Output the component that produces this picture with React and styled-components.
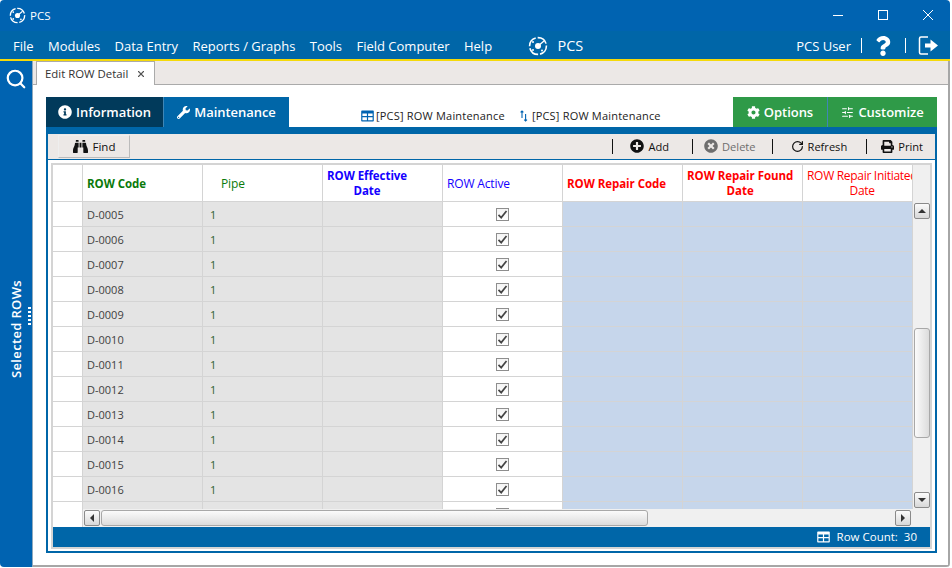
import React from "react";
import styled, { createGlobalStyle } from "styled-components";
import { FaInfoCircle, FaWrench, FaCog, FaBinoculars, FaPlusCircle, FaTimesCircle, FaPrint, FaQuestion } from "react-icons/fa";
import { RotateCw, SlidersHorizontal, Search, X } from "lucide-react";

const BLUE = "#0063b1";
const BAND = "#0066a8";
const LINE = "#d4d4d4";
const FONT = `"Open Sans", "Noto Sans", sans-serif`;

const GlobalStyle = createGlobalStyle`
  html, body { margin: 0; padding: 0; background: #fff; }
  * { box-sizing: border-box; }
  body { font-family: ${FONT}; font-size: 12px; }
`;

const Page = styled.div`
  width: 952px;
  height: 568px;
  overflow: hidden;
`;
const Window = styled.div`
  width: 950px;
  height: 567px;
  display: flex;
  flex-direction: column;
  overflow: hidden;
  background: #fff;
  border-radius: 4px;
`;

const TitleBar = styled.div`
  height: 31px;
  flex: none;
  background: ${BLUE};
  color: #fff;
  display: flex;
  align-items: center;
  padding: 0 0 1px 9px;
  font-size: 11.5px;
`;
const TitleText = styled.span`
  margin-left: 4px;
  flex: 1;
`;
const WinButton = styled.div`
  width: 45px;
  height: 30px;
  display: flex;
  align-items: center;
  justify-content: center;
`;

const MenuBar = styled.div`
  height: 30px;
  flex: none;
  background: ${BAND};
  border-bottom: 2px solid #f5d90a;
  color: #fff;
  display: flex;
  align-items: center;
  padding: 1px 11px 0 13px;
  font-size: 13px;
`;
const MenuItem = styled.span`
  margin-right: 14.4px;
`;
const AppName = styled.div`
  display: flex;
  align-items: center;
  gap: 9px;
  margin-left: 22px;
  font-size: 14.5px;
  flex: 1;
`;
const Divider = styled.span`
  flex: none;
  width: 1px;
  height: 15px;
  background: ${(p) => p.$color || "#fff"};
  margin-left: ${(p) => p.$left ?? 10}px;
  margin-right: ${(p) => p.$right ?? 10}px;
`;
const HelpIcon = styled(FaQuestion)`
  flex: none;
  margin: 0 2px 0 1px;
`;

const Body = styled.div`
  flex: 1;
  min-height: 0;
  display: flex;
`;
const Rail = styled.div`
  width: 33px;
  flex: none;
  background: ${BLUE};
  color: #fff;
  position: relative;
  display: flex;
  flex-direction: column;
  align-items: center;
  padding-top: 7px;
  border-right: 1px solid #8fa9bd;
`;
const RailLabel = styled.div`
  writing-mode: vertical-rl;
  transform: rotate(180deg);
  font-size: 13px;
  font-weight: 600;
  letter-spacing: 0.35px;
  line-height: 16px;
  margin-top: 190px;
`;
const Grip = styled.div`
  position: absolute;
  left: 28px;
  top: 246px;
  width: 3px;
  height: 18px;
  background: repeating-linear-gradient(to bottom, #fff 0 2px, transparent 2px 4px);
`;

const Main = styled.div`
  flex: 1;
  min-width: 0;
  display: flex;
  flex-direction: column;
  border-right: 2px solid #a6a6a6;
  border-bottom: 2px solid #a6a6a6;
`;
const DocTabs = styled.div`
  height: 24px;
  flex: none;
  background: #ece8e6;
  border-bottom: 1px solid #aaa;
  padding-left: 3px;
  display: flex;
`;
const DocTab = styled.div`
  width: 119px;
  height: 24px;
  background: #fff;
  border: 1px solid #aaa;
  border-bottom: none;
  padding: 0 8px 0 8px;
  display: flex;
  align-items: center;
  justify-content: space-between;
  color: #333;
  font-size: 11.4px;
`;
const Content = styled.div`
  flex: 1;
  min-height: 0;
  padding: 12px 11px 12px 13px;
  display: flex;
  flex-direction: column;
`;

const TabRow = styled.div`
  height: 30px;
  flex: none;
  display: flex;
  align-items: stretch;
`;
const PanelTab = styled.div`
  width: ${(p) => p.$w}px;
  background: ${(p) => p.$bg};
  color: #fff;
  font-size: 13px;
  font-weight: 600;
  letter-spacing: -0.05px;
  display: flex;
  align-items: center;
  justify-content: center;
  gap: 4px;
  border-left: ${(p) => (p.$split ? "1px solid #3f86b5" : "none")};
`;
const ViewLabels = styled.div`
  flex: 1;
  display: flex;
  align-items: flex-end;
  padding: 0 0 4px 72px;
  font-size: 11px;
  letter-spacing: 0.2px;
  color: #222;
  gap: 13px;
`;
const ViewLabel = styled.span`
  display: flex;
  align-items: center;
  gap: 2px;
`;

const Panel = styled.div`
  flex: 1;
  min-height: 0;
  border: 2px solid ${BAND};
  border-top-width: 7px;
  padding-bottom: 2px;
  display: flex;
  flex-direction: column;
`;
const Toolbar = styled.div`
  height: 26px;
  flex: none;
  background: #ece8e6;
  border-bottom: 1px solid ${BAND};
  display: flex;
  align-items: center;
  padding: 0 12px 1px 10px;
  font-size: 11.1px;
  color: #111;
`;
const FindButton = styled.div`
  width: 72px;
  height: 23px;
  margin-top: 1px;
  border: 1px solid #bbb;
  border-top-color: #eee;
  border-left-color: #eee;
  display: flex;
  align-items: center;
  justify-content: center;
  gap: 5px;
  margin-right: auto;
  font-size: 11.5px;
`;
const ToolButton = styled.div`
  display: flex;
  align-items: center;
  gap: 4px;
  color: ${(p) => (p.$disabled ? "#6e6e6e" : "#111")};
`;

const GridFrame = styled.div`
  flex: 1;
  min-height: 0;
  margin: 3px 3px 0;
  border: 2px solid ${LINE};
  display: flex;
  flex-direction: column;
`;
const GridBody = styled.div`
  flex: 1;
  min-height: 0;
  display: flex;
`;
const Table = styled.div`
  flex: 1;
  min-width: 0;
  overflow: hidden;
`;
const GridRow = styled.div`
  display: grid;
  grid-template-columns: 30px repeat(6, 120px) 110px;
  height: ${(p) => p.$h}px;
`;
const HeadCell = styled.div`
  border-right: 1px solid ${LINE};
  border-bottom: 1px solid ${LINE};
  background: #fff;
  color: ${(p) => p.$color || "#000"};
  font-weight: ${(p) => (p.$bold ? 700 : 400)};
  font-size: ${(p) => (p.$bold ? 11.5 : 12)}px;
  line-height: 15px;
  letter-spacing: ${(p) => (p.$tight ? -0.3 : p.$bold ? -0.05 : -0.15)}px;
  text-align: center;
  white-space: nowrap;
  padding-left: ${(p) => p.$pad ?? 4}px;
  display: flex;
  align-items: center;
  overflow: hidden;
`;
const Cell = styled.div`
  border-right: 1px solid ${LINE};
  border-bottom: 1px solid ${LINE};
  background: ${(p) => p.$bg || "#fff"};
  color: ${(p) => p.$color || "#3f3f3f"};
  font-size: 11px;
  padding-left: ${(p) => p.$pad || 0}px;
  display: flex;
  align-items: center;
  justify-content: ${(p) => (p.$center ? "center" : "flex-start")};
`;
const CheckBox = styled.div`
  width: 13px;
  height: 13px;
  border: 1px solid #8e8e8e;
  background: linear-gradient(#f4f4f4, #fff);
  display: flex;
  align-items: center;
  justify-content: center;
`;

const ScrollV = styled.div`
  width: 17px;
  flex: none;
  background: #f0f0f0;
  display: flex;
  flex-direction: column;
  align-items: center;
  padding: 38px 0 1px;
`;
const ScrollH = styled.div`
  height: 18px;
  flex: none;
  display: flex;
`;
const Corner = styled.div`
  width: 30px;
  flex: none;
  background: #fff;
  border-right: 1px solid ${LINE};
`;
const HTrack = styled.div`
  flex: 1;
  background: #f0f0f0;
  display: flex;
  align-items: center;
  padding: 0 19px 0 1px;
`;
const Arrow = styled.div`
  width: 16px;
  height: 16px;
  flex: none;
  border: 1px solid #8a8a8a;
  border-radius: 2px;
  background: linear-gradient(#fbfbfb, #d8d8d8);
  display: flex;
  align-items: center;
  justify-content: center;
`;
const Tri = styled.div`
  width: 0;
  height: 0;
  border-style: solid;
  border-color: transparent;
  ${(p) =>
    p.$dir === "up"
      ? "border-width: 0 4px 4px; border-bottom-color: #333;"
      : p.$dir === "down"
      ? "border-width: 4px 4px 0; border-top-color: #333;"
      : p.$dir === "left"
      ? "border-width: 4px 4px 4px 0; border-right-color: #333;"
      : "border-width: 4px 0 4px 4px; border-left-color: #333;"}
`;
const ThumbH = styled.div`
  width: 547px;
  height: 16px;
  margin-left: 1px;
  border: 1px solid #a8a8a8;
  border-radius: 3px;
  background: linear-gradient(#fbfbfb, #dcdcdc);
`;
const ThumbV = styled.div`
  width: 16px;
  height: 110px;
  margin-top: 109px;
  border: 1px solid #a8a8a8;
  border-radius: 3px;
  background: linear-gradient(to right, #fbfbfb, #dcdcdc);
`;
const Spacer = styled.div`
  flex: 1;
`;
const StatusBar = styled.div`
  height: 20px;
  flex: none;
  background: ${BAND};
  color: #fff;
  font-size: 11.5px;
  display: flex;
  align-items: center;
  justify-content: flex-end;
  gap: 7px;
  padding: 0 13px 1px 0;
`;

const Logo = ({ size = 18 }) => (
  <svg width={size} height={size} viewBox="0 0 20 20" fill="none" stroke="#fff">
    <circle cx="10" cy="10" r="8.4" strokeWidth="1.6" strokeDasharray="11 2" />
    <circle cx="10" cy="10" r="3" fill="#fff" stroke="none" />
    <path d="M10 10 L16 5" strokeWidth="1.3" />
    <circle cx="5" cy="6" r="1" fill="#fff" stroke="none" />
    <circle cx="5" cy="14" r="1" fill="#fff" stroke="none" />
    <circle cx="14" cy="14.5" r="1" fill="#fff" stroke="none" />
  </svg>
);

const Minimize = () => (
  <svg width="12" height="12" viewBox="0 0 12 12"><path d="M1 6.5 H11" stroke="#fff" /></svg>
);
const Maximize = () => (
  <svg width="12" height="12" viewBox="0 0 12 12"><rect x="1.5" y="1.5" width="9" height="9" fill="none" stroke="#fff" /></svg>
);
const Close = () => (
  <svg width="12" height="12" viewBox="0 0 12 12"><path d="M1 1 L11 11 M11 1 L1 11" stroke="#fff" /></svg>
);

const Exit = () => (
  <svg width="21" height="21" viewBox="0 0 21 21" fill="none">
    <path d="M10 2 H3 a1.5 1.5 0 0 0 -1.5 1.5 V17.5 a1.5 1.5 0 0 0 1.5 1.5 H10" stroke="#fff" strokeWidth="1.5" />
    <path d="M7 8.5 H12.5 V4.5 L20 10.5 L12.5 16.5 V12.5 H7 Z" fill="#fff" />
  </svg>
);

const SortIcon = () => (
  <svg width="12" height="12" viewBox="0 0 12 12" fill="none" strokeWidth="1.1">
    <path d="M4 8 V1 M2.6 2.4 L4 1 L5.4 2.4" stroke="#0063b1" />
    <path d="M7.6 4 V11 M6.2 9.6 L7.6 11 L9 9.6" stroke="#0063b1" />
  </svg>
);

const GridIcon = ({ color = "#0063b1" }) => (
  <svg width="13" height="12" viewBox="0 0 13 12">
    <path fillRule="evenodd" fill={color} d="M1 0.5 H12 a0.8 0.8 0 0 1 0.8 0.8 V10.7 a0.8 0.8 0 0 1 -0.8 0.8 H1 a0.8 0.8 0 0 1 -0.8 -0.8 V1.3 a0.8 0.8 0 0 1 0.8 -0.8 Z M1.4 3.6 V6 H5.9 V3.6 Z M7.1 3.6 V6 H11.6 V3.6 Z M1.4 7.2 V10.3 H5.9 V7.2 Z M7.1 7.2 V10.3 H11.6 V7.2 Z" />
  </svg>
);

const Tick = () => (
  <svg width="11" height="11" viewBox="0 0 11 11" fill="none">
    <path d="M1.5 5.8 L4.2 8.6 L9.5 2" stroke="#444" strokeWidth="1.7" />
  </svg>
);

const menus = ["File", "Modules", "Data Entry", "Reports / Graphs", "Tools", "Field Computer", "Help"];
const rows = ["D-0005", "D-0006", "D-0007", "D-0008", "D-0009", "D-0010", "D-0011", "D-0012", "D-0013", "D-0014", "D-0015", "D-0016", ""];

const GRAY = "#e4e4e4";
const REPAIR = "#c6d6eb";
const GREEN = "#0a7a0a";
const VIOLET = "#1400ff";
const RED = "#f00";

export default function App() {
  return (
    <Page>
      <GlobalStyle />
      <Window>
        <TitleBar>
          <Logo size={17} />
          <TitleText>PCS</TitleText>
          <WinButton><Minimize /></WinButton>
          <WinButton><Maximize /></WinButton>
          <WinButton><Close /></WinButton>
        </TitleBar>
        <MenuBar>
          {menus.map((m) => (
            <MenuItem key={m}>{m}</MenuItem>
          ))}
          <AppName>
            <Logo size={20} />
            PCS
          </AppName>
          <span>PCS User</span>
          <Divider />
          <HelpIcon size={20} />
          <Divider $right={12} />
          <Exit />
        </MenuBar>
        <Body>
          <Rail>
            <Search size={22} strokeWidth={2.4} />
            <RailLabel>Selected ROWs</RailLabel>
            <Grip />
          </Rail>
          <Main>
            <DocTabs>
              <DocTab>
                Edit ROW Detail
                <X size={10} strokeWidth={2.6} color="#555" />
              </DocTab>
            </DocTabs>
            <Content>
              <TabRow>
                <PanelTab $w={117} $bg="#013a5b"><FaInfoCircle size={14} /> Information</PanelTab>
                <PanelTab $w={126} $bg={BAND} $split><FaWrench size={13} /> Maintenance</PanelTab>
                <ViewLabels>
                  <ViewLabel><GridIcon />[PCS] ROW Maintenance</ViewLabel>
                  <ViewLabel><SortIcon />[PCS] ROW Maintenance</ViewLabel>
                </ViewLabels>
                <PanelTab $w={94} $bg="#2f9a48"><FaCog size={13} /> Options</PanelTab>
                <PanelTab $w={110} $bg="#2f9a48" $split><SlidersHorizontal size={13} /> Customize</PanelTab>
              </TabRow>
              <Panel>
                <Toolbar>
                  <FindButton><FaBinoculars size={15} color="#111" /> Find</FindButton>
                  <Divider $color="#111" $left={0} $right={17} />
                  <ToolButton><FaPlusCircle size={14} /> Add</ToolButton>
                  <Divider $color="#111" $left={23} $right={11} />
                  <ToolButton $disabled><FaTimesCircle size={14} /> Delete</ToolButton>
                  <Divider $color="#111" $left={16} $right={18} />
                  <ToolButton><RotateCw size={13} strokeWidth={2.2} /> Refresh</ToolButton>
                  <Divider $color="#111" $left={19} $right={14} />
                  <ToolButton><FaPrint size={13} /> Print</ToolButton>
                </Toolbar>
                <GridFrame>
                  <GridBody>
                    <Table>
                      <GridRow $h={37}>
                        <HeadCell />
                        <HeadCell $color={GREEN} $bold>ROW Code</HeadCell>
                        <HeadCell $color={GREEN} $pad={18}>Pipe</HeadCell>
                        <HeadCell $color={VIOLET} $bold><span>ROW Effective<br />Date</span></HeadCell>
                        <HeadCell $color={VIOLET}>ROW Active</HeadCell>
                        <HeadCell $color={RED} $bold>ROW Repair Code</HeadCell>
                        <HeadCell $color={RED} $bold><span>ROW Repair Found<br />Date</span></HeadCell>
                        <HeadCell $color={RED} $tight><span>ROW Repair Initiated<br />Date</span></HeadCell>
                      </GridRow>
                      {rows.map((code, i) => (
                        <GridRow key={i} $h={25}>
                          <Cell />
                          <Cell $bg={GRAY} $pad={4}>{code}</Cell>
                          <Cell $bg={GRAY} $pad={7} $color="#2f5f2f">{code && "1"}</Cell>
                          <Cell $bg={GRAY} />
                          <Cell $center><CheckBox><Tick /></CheckBox></Cell>
                          <Cell $bg={REPAIR} />
                          <Cell $bg={REPAIR} />
                          <Cell $bg={REPAIR} />
                        </GridRow>
                      ))}
                    </Table>
                    <ScrollV>
                      <Arrow><Tri $dir="up" /></Arrow>
                      <ThumbV />
                      <Spacer />
                      <Arrow><Tri $dir="down" /></Arrow>
                    </ScrollV>
                  </GridBody>
                  <ScrollH>
                    <Corner />
                    <HTrack>
                      <Arrow><Tri $dir="left" /></Arrow>
                      <ThumbH />
                      <Spacer />
                      <Arrow><Tri $dir="right" /></Arrow>
                    </HTrack>
                  </ScrollH>
                  <StatusBar>
                    <GridIcon color="#fff" />
                    Row Count:&nbsp; 30
                  </StatusBar>
                </GridFrame>
              </Panel>
            </Content>
          </Main>
        </Body>
      </Window>
    </Page>
  );
}
